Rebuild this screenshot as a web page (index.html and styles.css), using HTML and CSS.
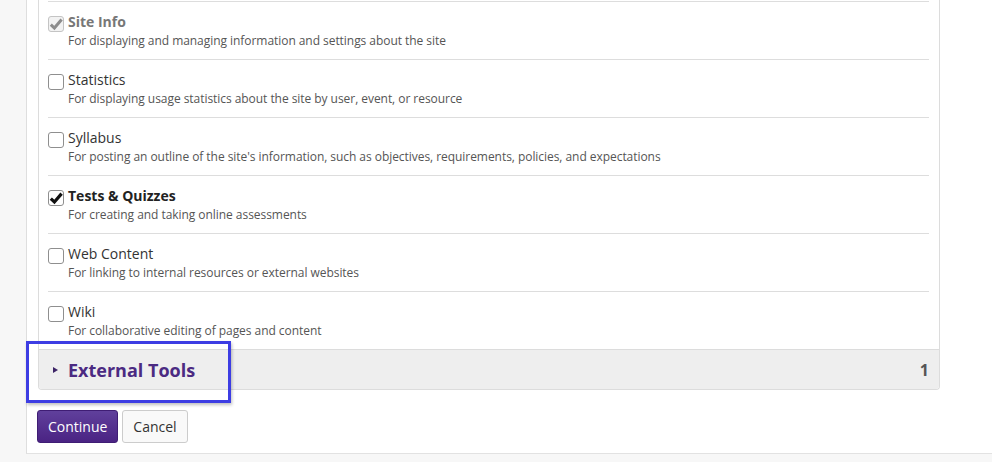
FILE: index.html
```html
<!DOCTYPE html>
<html>
<head>
<meta charset="utf-8">
<link rel="stylesheet" href="styles.css">
</head>
<body>
<div class="main">
  <div class="panel">
    <div class="panel-body">
      <div class="row">
        <span class="cb cb-disabled"><svg viewBox="0 0 14 14" width="14" height="14"><path d="M1.8 7.6 L5.4 11 L12.6 2.6" fill="none" stroke="#8c8c8c" stroke-width="3" stroke-linejoin="miter"/></svg></span>
        <div class="text">
          <div class="title title-disabled">Site Info</div>
          <div class="desc">For displaying and managing information and settings about the site</div>
        </div>
      </div>
      <div class="row">
        <span class="cb"></span>
        <div class="text">
          <div class="title">Statistics</div>
          <div class="desc">For displaying usage statistics about the site by user, event, or resource</div>
        </div>
      </div>
      <div class="row">
        <span class="cb"></span>
        <div class="text">
          <div class="title">Syllabus</div>
          <div class="desc">For posting an outline of the site's information, such as objectives, requirements, policies, and expectations</div>
        </div>
      </div>
      <div class="row">
        <span class="cb cb-checked"><svg viewBox="0 0 14 14" width="14" height="14"><path d="M1.8 7.6 L5.4 11 L12.6 2.6" fill="none" stroke="#111" stroke-width="3.2" stroke-linejoin="miter"/></svg></span>
        <div class="text">
          <div class="title title-bold">Tests &amp; Quizzes</div>
          <div class="desc">For creating and taking online assessments</div>
        </div>
      </div>
      <div class="row">
        <span class="cb"></span>
        <div class="text">
          <div class="title">Web Content</div>
          <div class="desc">For linking to internal resources or external websites</div>
        </div>
      </div>
      <div class="row">
        <span class="cb"></span>
        <div class="text">
          <div class="title">Wiki</div>
          <div class="desc">For collaborative editing of pages and content</div>
        </div>
      </div>
    </div>
    <div class="panel-footer">
      <span class="caret"></span>
      <span class="footer-title">External Tools</span>
      <span class="count">1</span>
    </div>
  </div>
  <div class="actions">
    <button class="btn btn-primary">Continue</button>
    <button class="btn btn-default">Cancel</button>
  </div>
  <div class="highlight"></div>
</div>
</body>
</html>
```

FILE: styles.css
```css
html, body {
  margin: 0;
  padding: 0;
}
body {
  background: #f7f7f7;
  font-family: "Open Sans", "Liberation Sans", sans-serif;
  color: #333;
  height: 462px;
  overflow: hidden;
}
.main {
  position: relative;
  margin-left: 26px;
  height: 454px;
  background: #fff;
  border-left: 1px solid #dedede;
  border-bottom: 1px solid #e2e2e2;
  box-sizing: border-box;
}
.panel {
  margin-left: 11px;
  width: 902px;
  border: 1px solid #dcdcdc;
  border-top: none;
  border-radius: 0 0 4px 4px;
  box-sizing: border-box;
  overflow: hidden;
}
.panel-body {
  padding: 1px 10px 0 9px;
}
.row {
  display: flex;
  align-items: flex-start;
  border-top: 1px solid #dddddd;
  height: 58px;
  box-sizing: border-box;
  padding-top: 10px;
}
.cb {
  flex: 0 0 auto;
  width: 14px;
  height: 14px;
  border: 1px solid #8f8f8f;
  border-radius: 3px;
  margin-top: 4px;
  margin-right: 4px;
  background: #fff;
  box-sizing: content-box;
  display: flex;
  overflow: visible;
}
.cb-disabled {
  border-color: #c4c4c4;
  background: #f2f2f2;
}
.cb svg {
  display: block;
  overflow: visible;
}
.title {
  font-size: 14px;
  line-height: 20px;
  color: #333;
}
.title-bold {
  font-weight: 700;
  color: #222;
}
.title-disabled {
  font-weight: 700;
  color: #777;
}
.desc {
  font-size: 12px;
  line-height: 17px;
  color: #555;
  letter-spacing: -0.05px;
}
.panel-footer {
  display: flex;
  align-items: center;
  height: 40px;
  background: #eeeeee;
  border-top: 1px solid #dcdcdc;
  box-sizing: border-box;
  padding: 0 10px 0 14px;
}
.caret {
  width: 0;
  height: 0;
  border-top: 3.5px solid transparent;
  border-bottom: 3.5px solid transparent;
  border-left: 5px solid #3c2466;
  margin-right: 10px;
  margin-top: 1px;
}
.footer-title {
  font-size: 18px;
  font-weight: 700;
  color: #4b2a82;
  flex: 1;
}
.count {
  font-size: 16px;
  font-weight: 700;
  color: #555;
}
.actions {
  display: flex;
  gap: 4px;
  margin: 20px 0 0 10px;
}
.btn {
  font-family: "Open Sans", "Liberation Sans", sans-serif;
  font-size: 14px;
  height: 33px;
  padding: 0 10px;
  border-radius: 3px;
  box-sizing: border-box;
  cursor: pointer;
}
.btn-primary {
  width: 81px;
  color: #fff;
  background: linear-gradient(#60409c, #4a2383);
  border: 1px solid #3f1d74;
}
.btn-default {
  width: 66px;
  color: #333;
  background: #f9f9f9;
  border: 1px solid #cccccc;
}
.highlight {
  position: absolute;
  left: -1px;
  top: 341px;
  width: 205px;
  height: 62px;
  box-sizing: border-box;
  border: 3px solid #3d3de3;
  box-shadow: 1px 2px 3px rgba(0, 0, 0, 0.25);
}
```
